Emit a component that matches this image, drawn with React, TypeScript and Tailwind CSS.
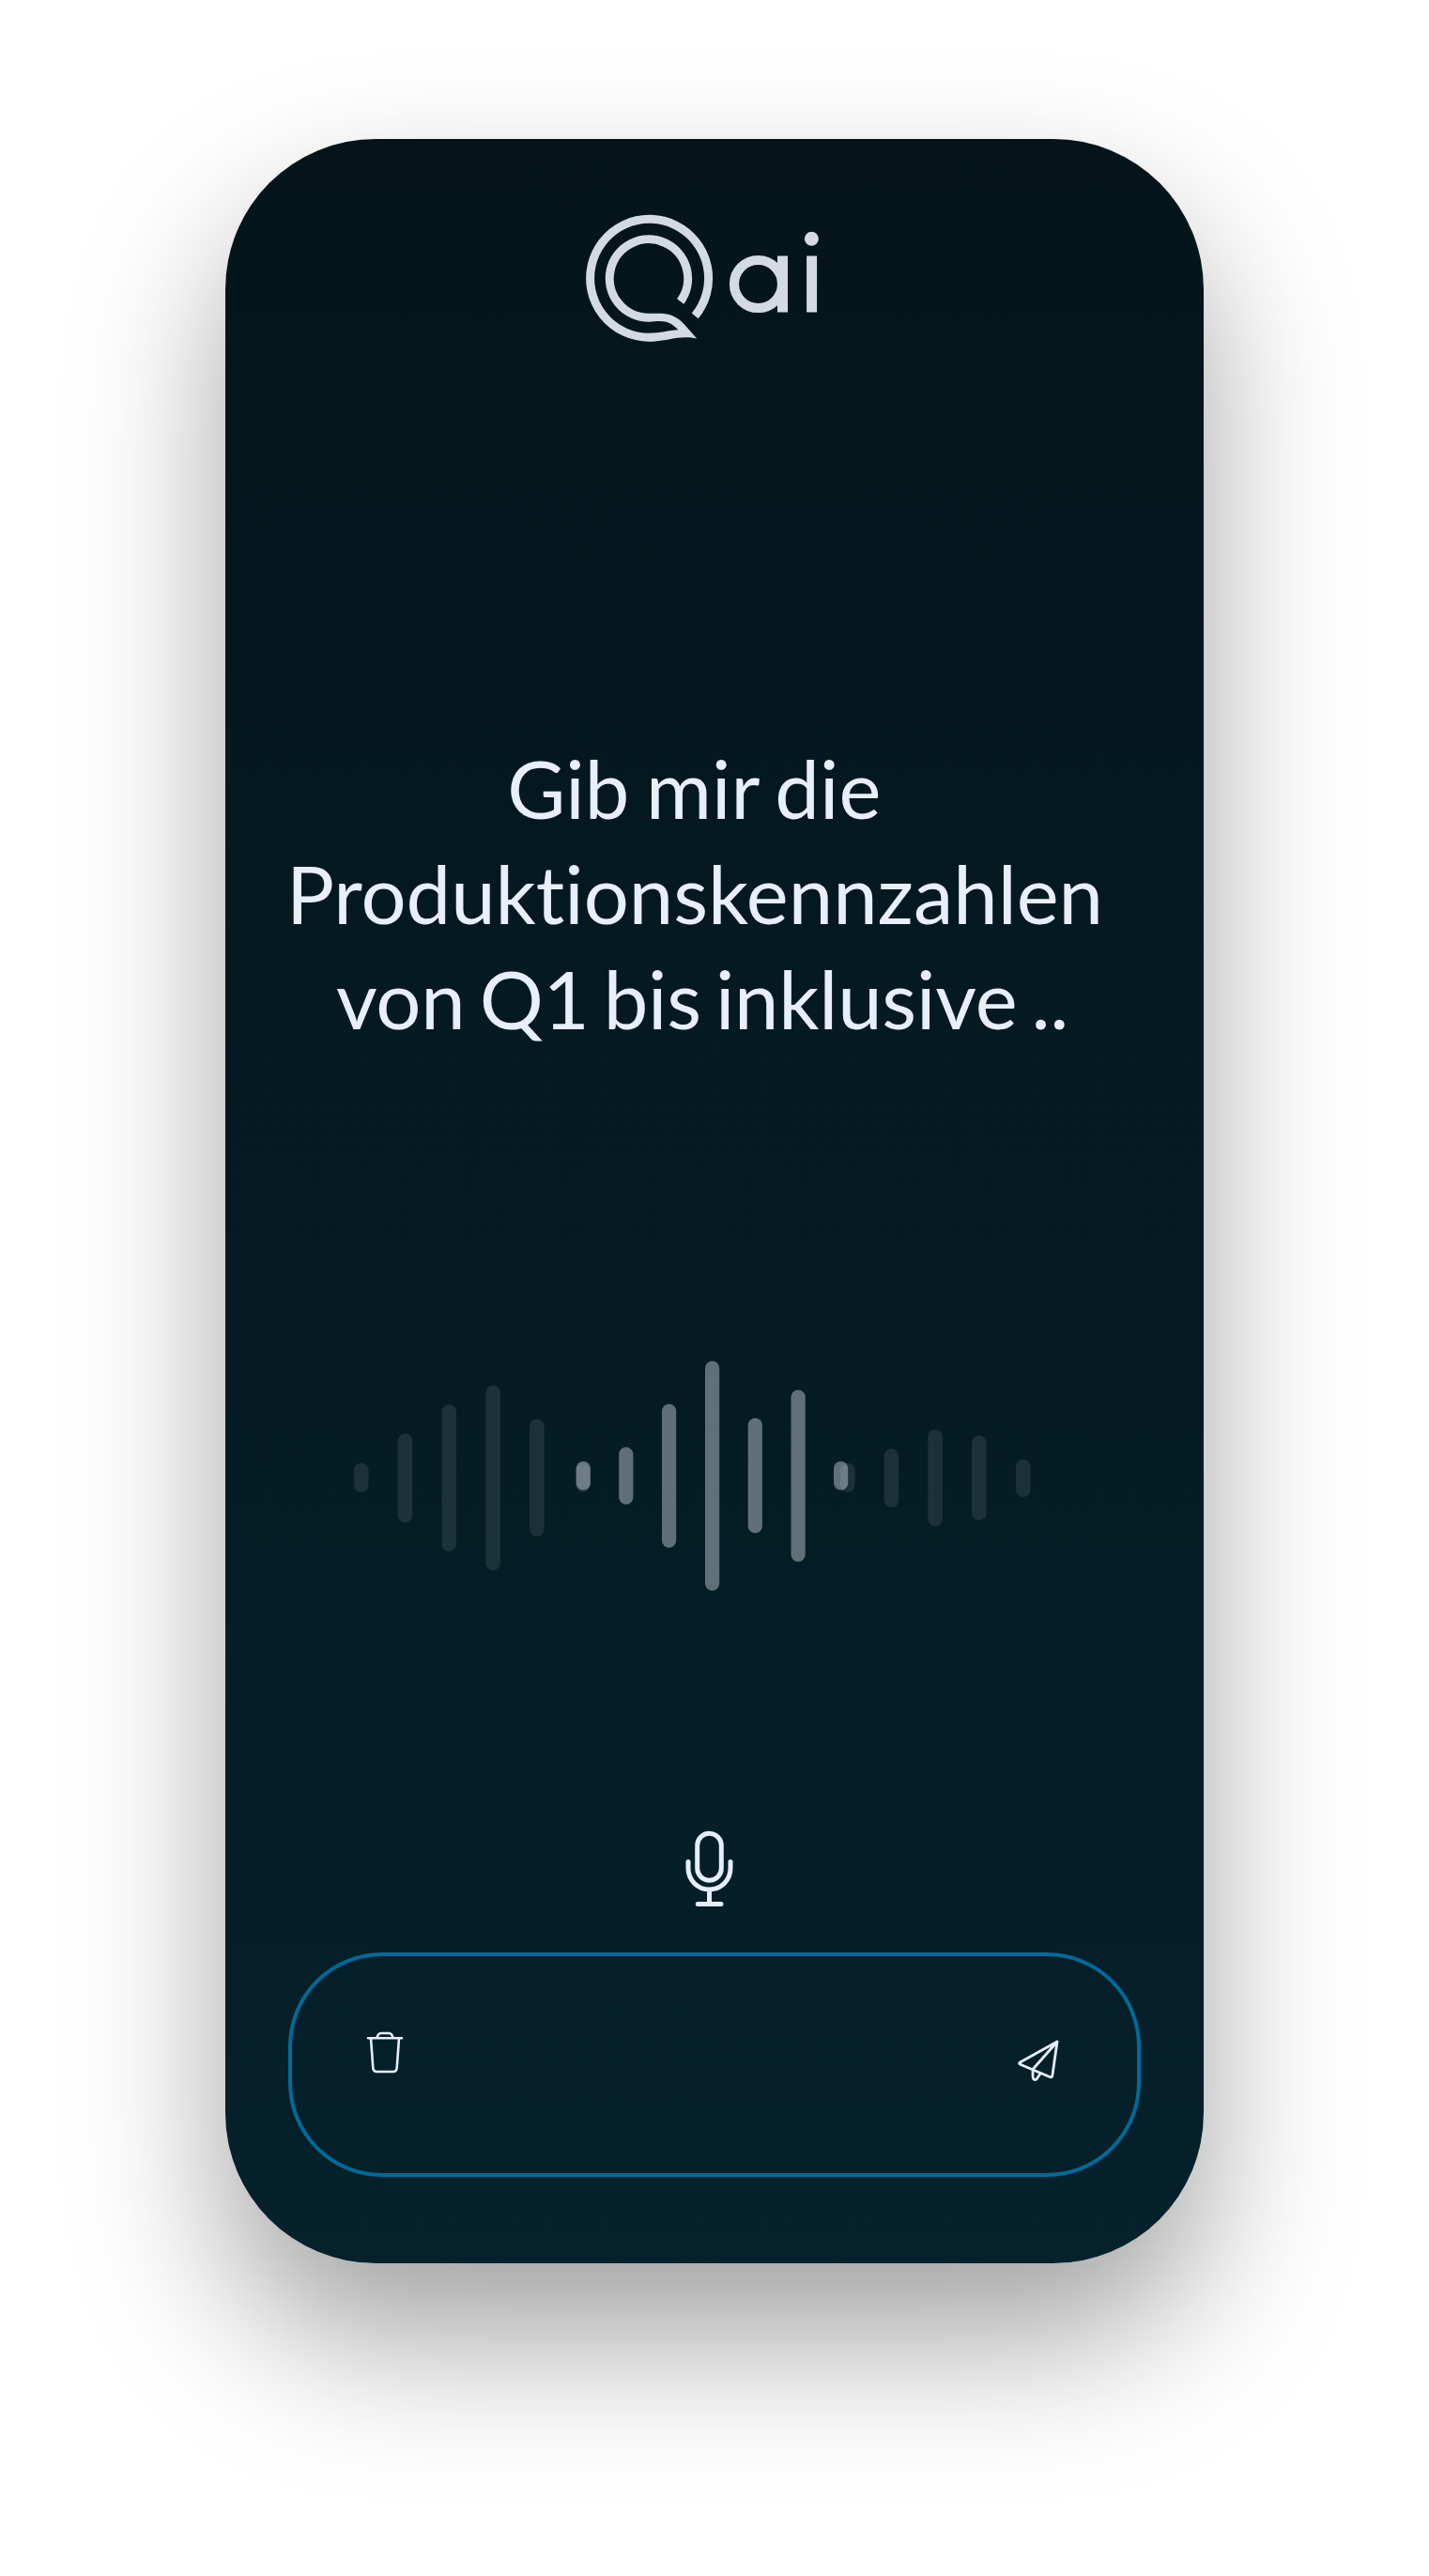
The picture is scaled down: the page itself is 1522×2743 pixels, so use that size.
const faint: [number, number, number][] = [
  [377, 1558, 31],
  [423.7, 1526.6, 94.6],
  [470.4, 1495.6, 156.4],
  [517.3, 1475.3, 196.7],
  [564, 1511, 125],
  [613, 1558, 31],
  [895, 1558, 31],
  [941.6, 1542.6, 62.6],
  [988.3, 1522, 103.4],
  [1035, 1528.4, 90.6],
  [1082, 1554, 40],
];

const strong: [number, number, number][] = [
  [613.7, 1556, 30.8],
  [659.2, 1541, 61],
  [705, 1495, 153],
  [751, 1449.3, 244.4],
  [796.7, 1510, 122.5],
  [842.5, 1480, 183],
  [888, 1556, 30.8],
];

function Logo() {
  return (
    <svg className="h-[140px] w-[140px]" viewBox="620 225 140 140" fill="none" stroke="#d3dae4" strokeWidth="9">
      <path d="M740.2 336.4A63 63 0 1 0 691.2 359.3" />
      <path d="M724.7 321A41.7 41.7 0 1 0 691.2 338.2" />
      <path
        d="M691 333.7C697 333.9 700 333.4 705 333.8C715 334.4 722.5 338.5 728.5 345L742.2 360.6C736 359.2 729 358.9 722 359.8C711 361.2 704 363.8 691 363.8V354.8C704 354.8 711 351.8 722.3 351.3C716.5 345 711 342 703 342C698.5 342 696 342.7 691 342.7Z"
        fill="#d3dae4"
        stroke="none"
      />
    </svg>
  );
}

function Wave() {
  return (
    <svg className="h-[260px] w-[740px]" viewBox="365 1441 740 260">
      <g fill="#ffffff" fillOpacity="0.095">
        {faint.map(([x, y, h]) => (
          <rect key={x} x={x} y={y} width="15.6" height={h} rx="7.8" />
        ))}
      </g>
      <g fill="#e8edf8" fillOpacity="0.4">
        {strong.map(([x, y, h]) => (
          <rect key={x} x={x} y={y} width="15.2" height={h} rx="7.6" />
        ))}
      </g>
    </svg>
  );
}

export default function App() {
  return (
    <div className="h-[2743px] w-[1522px] overflow-hidden bg-white pt-[148px] pl-[240px] font-['Lato',sans-serif]">
      <main className="flex h-[2262px] w-[1042px] flex-col rounded-[160px] bg-linear-to-b from-[#04141a] to-[#05212b] shadow-[0_80px_160px_rgba(0,0,0,0.37)]">
        <header className="flex h-[217px] gap-[10px] pt-[77px] pl-[380px]">
          <Logo />
          <svg className="mt-[10px] h-[100px] w-[110px]" viewBox="770 235 110 100" fill="none">
            <circle cx="807.5" cy="302.5" r="25.5" stroke="#d3dae4" strokeWidth="10.2" />
            <path d="M833.5 272.6V332.4M864.6 272.6V332.4" stroke="#d3dae4" strokeWidth="11" />
            <circle cx="864.4" cy="254.3" r="7.5" fill="#d3dae4" />
          </svg>
        </header>
        <p className="mt-[418px] ml-[-42px] text-center text-[85px] leading-[112px] text-[#e8eefa] [font-variant-ligatures:none]">
          <span className="block pr-px tracking-[0.15px] [word-spacing:-4.5px]">Gib mir die</span>
          <span className="block">Produktionskennzahlen</span>
          <span className="block pl-4 tracking-[-0.2px] [word-spacing:-6.5px]">von Q1 bis inklusive ..</span>
        </p>
        <div className="mt-[322px] ml-[125px]">
          <Wave />
        </div>
        <svg className="mt-[242px] ml-[483px] h-[90px] w-[64px] shrink-0" viewBox="723 1943 64 90" fill="none" stroke="#e5eeff" strokeWidth="5" strokeLinecap="round">
          <rect x="742.7" y="1952.3" width="25.6" height="50" rx="12.8" />
          <path d="M733 1982.5V1989.5A22.5 22.5 0 0 0 778 1989.5V1982.5M755.5 2012V2027.5M743.3 2027.5H768" />
        </svg>
        <div className="mt-[46px] ml-[67px] flex h-[239px] w-[908px] shrink-0 justify-between rounded-[100px] border-4 border-[#006a99] pr-[76px] pl-[77px]">
          <svg className="mt-[76px] h-[56px] w-[48px]" viewBox="388 2159 48 56" fill="none" stroke="#e5eeff" strokeWidth="2.6" strokeLinecap="round" strokeLinejoin="round">
            <path d="M392 2170.3H428M395 2170.3L397.3 2202Q397.6 2206 401.5 2206H418.5Q422.4 2206 422.7 2202L425 2170.3M401.5 2170Q402.5 2165 406 2165H414Q417.5 2165 418.5 2170" />
          </svg>
          <svg className="mt-[84px] h-[56px] w-[56px]" viewBox="1078 2167 56 56" fill="none" stroke="#e5eeff" strokeWidth="2.8" strokeLinecap="round" strokeLinejoin="round">
            <path d="M1125 2174L1085.5 2196Q1083.5 2197.3 1085.7 2198.3L1117.5 2211.7Q1119.6 2212.3 1119.9 2210L1125 2174L1099 2203.5V2211Q1099.3 2216 1103 2214L1107 2208" />
          </svg>
        </div>
      </main>
    </div>
  );
}
